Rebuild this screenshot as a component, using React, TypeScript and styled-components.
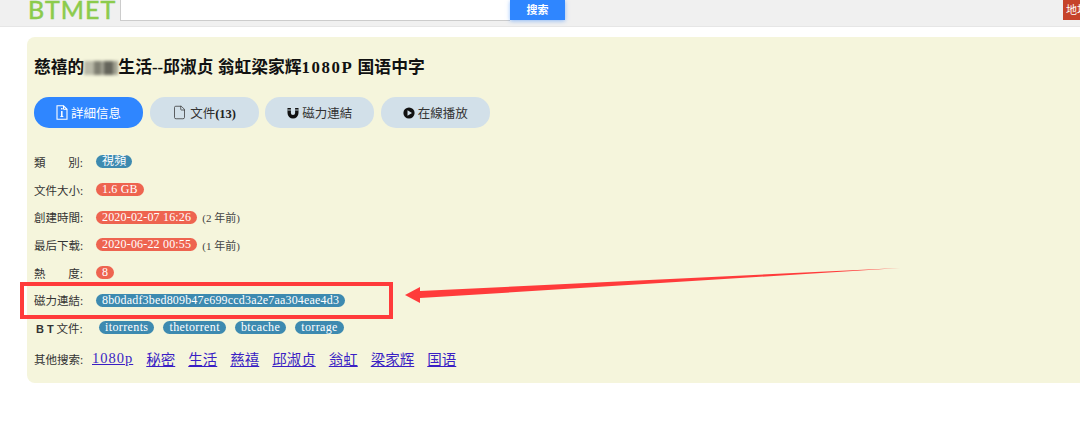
import React from "react";
import styled, { createGlobalStyle } from "styled-components";
import { File } from "lucide-react";

const SERIF = `"Liberation Serif", "Noto Sans CJK SC", serif`;

const GlobalStyle = createGlobalStyle`
  html, body {
    margin: 0;
    padding: 0;
    background: #fff;
    overflow: hidden;
  }
  body {
    font-family: ${SERIF};
  }
`;

const tabs = [
  { label: "詳細信息", icon: "info", active: true },
  { label: "文件", count: "(13)", icon: "file" },
  { label: "磁力連結", icon: "magnet" },
  { label: "在線播放", icon: "play" },
];

const links = ["1080p", "秘密", "生活", "慈禧", "邱淑贞", "翁虹", "梁家辉", "国语"];
const btSites = ["itorrents", "thetorrent", "btcache", "torrage"];

const MagnetIcon = () => (
  <svg width="12" height="12" viewBox="0 0 12 12">
    <path d="M0.5 1h3.4v5a2.1 2.1 0 0 0 4.2 0V1h3.4v5a5.5 5.5 0 0 1-11 0z" fill="#111" />
    <path d="M0.5 3h3.4M8.1 3h3.4" stroke="#d2e0e9" strokeWidth="0.9" />
  </svg>
);

const PlayIcon = () => (
  <svg width="12" height="12" viewBox="0 0 12 12">
    <circle cx="6" cy="6" r="5.6" fill="#111" />
    <path d="M4.5 3.2 9 6 4.5 8.8z" fill="#d2e0e9" />
  </svg>
);

const InfoFileIcon = () => (
  <svg width="12" height="15" viewBox="0 0 12 15" fill="none" stroke="#fff">
    <path d="M1 .8h6.5L11 4.3v9.9H1z" strokeWidth="1.1" />
    <path d="M7.5.8v3.5H11" strokeWidth="1" />
    <path d="M5.8 3v1.4M5.8 6v5" strokeWidth="1.5" />
    <path d="M4.4 11.5h2.9" strokeWidth="1.1" />
  </svg>
);

const TabIcon = ({ name }: { name: string }) => {
  if (name === "info") return <InfoFileIcon />;
  if (name === "file") return <File size={15} strokeWidth={1.2} />;
  if (name === "magnet") return <MagnetIcon />;
  return <PlayIcon />;
};

export default function App() {
  return (
    <>
      <GlobalStyle />
      <Header>
        <Logo>BTMET</Logo>
        <SearchInput />
        <SearchButton>搜索</SearchButton>
        <AddressButton>地址</AddressButton>
      </Header>
      <Panel>
        <Title>
          慈禧的<Mosaic />生活--邱淑贞 翁虹梁家辉<Digits>1080P</Digits> 国语中字
        </Title>
        <Tabs>
          {tabs.map((t) => (
            <Tab key={t.label} $active={t.active}>
              <TabIcon name={t.icon} />
              <span>
                {t.label}
                {t.count && <b>{t.count}</b>}
              </span>
            </Tab>
          ))}
        </Tabs>
        <Rows>
          <Row>
            <Label $spread>
              <span>類</span>
              <span>別:</span>
            </Label>
            <Badge>視頻</Badge>
          </Row>
          <Row>
            <Label>文件大小:</Label>
            <Badge $red>1.6 GB</Badge>
          </Row>
          <Row>
            <Label>創建時間:</Label>
            <Badge $red>2020-02-07 16:26</Badge>
            <Note>(2 年前)</Note>
          </Row>
          <Row>
            <Label>最后下载:</Label>
            <Badge $red>2020-06-22 00:55</Badge>
            <Note>(1 年前)</Note>
          </Row>
          <Row>
            <Label $spread>
              <span>熱</span>
              <span>度:</span>
            </Label>
            <Badge $red>8</Badge>
          </Row>
          <Row>
            <Label>磁力連結:</Label>
            <Badge>8b0dadf3bed809b47e699ccd3a2e7aa304eae4d3</Badge>
          </Row>
          <Row>
            <BtLabel>
              <b>B T</b> 文件:
            </BtLabel>
            <BtBadges>
              {btSites.map((s) => (
                <Badge key={s}>{s}</Badge>
              ))}
            </BtBadges>
          </Row>
        </Rows>
        <SearchRow>
          <SearchLabel>其他搜索:</SearchLabel>
          {links.map((l) => (
            <SearchLink key={l} href="#" $latin={/^\d/.test(l)}>
              {l}
            </SearchLink>
          ))}
        </SearchRow>
      </Panel>
      <Highlight />
      <Arrow width="500" height="40" viewBox="0 0 500 40">
        <path d="M0 28 15 20 15 24 495 1 15 31 15 36z" fill="#ff3b3b" />
      </Arrow>
    </>
  );
}

const Header = styled.header`
  height: 26px;
  box-sizing: content-box;
  background: #f0f0f0;
  border-bottom: 1px solid #e6e6e6;
  display: flex;
  align-items: flex-start;
  overflow: hidden;
  padding: 0 0 0 28px;
`;

const Logo = styled.div`
  width: 92px;
  height: 18px;
  flex: none;
  display: flex;
  align-items: flex-end;
  font-family: "Lato", sans-serif;
  font-size: 25px;
  line-height: 18px;
  letter-spacing: 1.1px;
  color: #8ccb4c;
  -webkit-text-stroke: 0.5px #8ccb4c;
`;

const SearchInput = styled.div`
  width: 390px;
  height: 21px;
  flex: none;
  box-sizing: border-box;
  background: #fff;
  border-left: 1px solid #ccc;
  border-bottom: 1px solid #ccc;
`;

const SearchButton = styled.div`
  width: 55px;
  height: 20px;
  flex: none;
  background: #2f86ff;
  color: #fff;
  font-size: 11px;
  font-weight: 700;
  line-height: 20px;
  text-align: center;
  box-shadow: 0 1px 4px rgba(47, 134, 255, 0.5);
`;

const AddressButton = styled.div`
  width: 30px;
  height: 20px;
  flex: none;
  margin-left: auto;
  margin-right: -13px;
  padding-left: 3px;
  box-sizing: border-box;
  background: #c6432a;
  color: #fff;
  font-size: 11px;
  line-height: 20px;
  white-space: nowrap;
`;

const Panel = styled.main`
  margin: 10px 0 0 27px;
  height: 346px;
  box-sizing: border-box;
  padding: 20px 0 0 7px;
  background: #f5f5dc;
  border-radius: 8px 0 0 8px;
`;

const Title = styled.h1`
  margin: 0;
  font-family: ${SERIF};
  font-size: 16.8px;
  line-height: 22px;
  font-weight: 700;
  color: #111;
  display: flex;
  align-items: center;
  white-space: pre;
`;

const Digits = styled.span`
  letter-spacing: 1.6px;
`;

const Mosaic = styled.span`
  width: 34px;
  height: 14px;
  background: linear-gradient(
    90deg,
    #b9b9a8 0 30%,
    #7f7f72 30% 50%,
    #a5a596 50% 60%,
    #65655b 60% 85%,
    #a0a090 85% 100%
  );
  filter: blur(1.5px);
`;

const Tabs = styled.nav`
  display: flex;
  gap: 6.6px;
  margin-top: 18px;
`;

const Tab = styled.div<{ $active?: boolean }>`
  width: 109px;
  height: 31px;
  border-radius: 15px;
  display: flex;
  align-items: center;
  justify-content: center;
  gap: 3px;
  font-size: 12.5px;
  background: ${({ $active }) => ($active ? "#2f86ff" : "#d2e0e9")};
  color: ${({ $active }) => ($active ? "#fff" : "#333")};

  b {
    color: #222;
  }
`;

const Rows = styled.div`
  display: flex;
  flex-direction: column;
  margin-top: 20px;
`;

const Row = styled.div`
  height: 27.7px;
  display: flex;
  align-items: center;
  gap: 5px;
`;

const Label = styled.span<{ $spread?: boolean }>`
  width: 57px;
  flex: none;
  display: flex;
  justify-content: ${({ $spread }) => ($spread ? "space-between" : "flex-start")};
  font-size: 11.5px;
  color: #333;
  box-sizing: border-box;
  padding-right: 8px;
  white-space: nowrap;
`;

const BtLabel = styled.span`
  width: 60px;
  flex: none;
  font-size: 11.5px;
  color: #333;
  padding-left: 2px;
  box-sizing: border-box;
  white-space: nowrap;

  b {
    font-family: "Liberation Sans", sans-serif;
    font-size: 11px;
  }
`;

const BtBadges = styled.div`
  display: flex;
  gap: 9px;

  && span {
    letter-spacing: 0.38px;
  }
`;

const Badge = styled.span<{ $red?: boolean }>`
  height: 13px;
  border-radius: 7px;
  padding: 0 6px;
  font-size: 12px;
  line-height: 13px;
  color: #fff;
  white-space: nowrap;
  letter-spacing: 0.18px;
  background: ${({ $red }) => ($red ? "#ee6450" : "#3d8ab0")};
`;

const Note = styled.span`
  font-size: 11px;
  color: #444;
`;

const SearchRow = styled.div`
  display: flex;
  align-items: center;
  gap: 13px;
  margin-top: 3px;
  height: 28px;
`;

const SearchLabel = styled.span`
  width: 47px;
  margin-right: -2px;
  font-size: 11.5px;
  color: #333;
  white-space: nowrap;
`;

const SearchLink = styled.a<{ $latin?: boolean }>`
  font-size: 14.5px;
  color: #3a1fc4;
  text-decoration: underline;
  letter-spacing: ${({ $latin }) => ($latin ? "1px" : "0")};
`;

const Highlight = styled.div`
  position: absolute;
  left: 20px;
  top: 282px;
  width: 373px;
  height: 37px;
  box-sizing: border-box;
  border: 4px solid #ff3b3b;
`;

const Arrow = styled.svg`
  position: absolute;
  left: 405px;
  top: 267px;
`;
